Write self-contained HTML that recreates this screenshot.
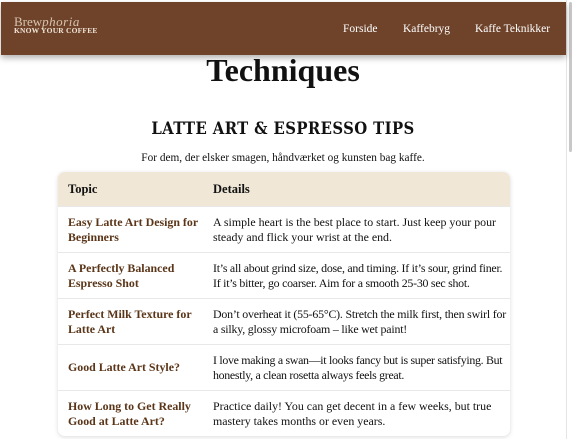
<!DOCTYPE html>
<html><head><meta charset="utf-8">
<style>
*{margin:0;padding:0;box-sizing:border-box}
html,body{width:573px;height:439px;overflow:hidden;background:#fff;font-family:"Liberation Serif",serif;color:#111}
.sb{position:absolute;right:0;top:0;width:7px;height:439px;background:#fff;border-left:1px solid #e4e4e4}
.sb i{position:absolute;left:2px;top:2px;width:3px;height:150px;background:#c8c8c8;border-radius:2px}
header{position:absolute;left:1px;top:2px;width:565px;height:53px;background:#6e432a;box-shadow:0 3px 6px rgba(0,0,0,.3)}
.logo{position:absolute;left:13px;top:15px;color:#e8d8c8;line-height:9px}
.logo .a{font-size:13px;font-family:"Liberation Serif",serif;color:#d8c4b0}
.logo .a em{font-style:italic;letter-spacing:.5px}
.logo .b{font-size:7.5px;font-weight:bold;letter-spacing:.2px;color:#f0e4d8}
nav{position:absolute;top:21px;font-size:11.5px;color:#fff}
h1{position:absolute;top:52px;left:0;width:566px;text-align:center;font-size:32px;font-weight:bold}
h2{position:absolute;top:119px;left:0;width:566px;text-align:center;font-family:"DejaVu Serif Condensed","DejaVu Serif",serif;font-size:16.5px;font-weight:bold;letter-spacing:.4px;color:#111}
p.sub{position:absolute;top:152px;left:0;width:566px;text-align:center;font-size:11.3px}
.tbl{position:absolute;left:58px;top:172px;width:452px;border-radius:7px;box-shadow:0 1px 5px rgba(0,0,0,.15);overflow:hidden}
.row{display:flex;height:46px;border-top:1px solid #e8e8e8;align-items:center;font-size:11.9px;line-height:14.5px}
.row.h{height:34px;background:#f0e7d6;border-top:none;font-weight:bold;font-size:12.5px}
.c1{width:155px;flex:0 0 155px;padding-left:10px;padding-right:8px}
.c2{flex:1;white-space:nowrap;min-width:0}
.row:not(.h) .c1{font-weight:bold;color:#5a3518}
</style></head><body>
<div class="sb"><i></i></div>
<header>
<div class="logo"><div class="a">Brew<em>phoria</em></div><div class="b">KNOW YOUR COFFEE</div></div>
<nav style="left:342px">Forside</nav>
<nav style="left:402px">Kaffebryg</nav>
<nav style="left:474px">Kaffe Teknikker</nav>
</header>
<h1>Techniques</h1>
<h2>LATTE ART &amp; ESPRESSO TIPS</h2>
<p class="sub">For dem, der elsker smagen, håndværket og kunsten bag kaffe.</p>
<div class="tbl">
<div class="row h"><div class="c1">Topic</div><div class="c2">Details</div></div>
<div class="row"><div class="c1">Easy Latte Art Design for Beginners</div><div class="c2">A simple heart is the best place to start. Just keep your pour<br>steady and flick your wrist at the end.</div></div>
<div class="row"><div class="c1">A Perfectly Balanced Espresso Shot</div><div class="c2" style="letter-spacing:-0.25px">It’s all about grind size, dose, and timing. If it’s sour, grind finer.<br>If it’s bitter, go coarser. Aim for a smooth 25-30 sec shot.</div></div>
<div class="row"><div class="c1">Perfect Milk Texture for Latte Art</div><div class="c2" style="letter-spacing:-0.2px">Don’t overheat it (55-65°C). Stretch the milk first, then swirl for<br>a silky, glossy microfoam – like wet paint!</div></div>
<div class="row"><div class="c1">Good Latte Art Style?</div><div class="c2" style="letter-spacing:-0.3px">I love making a swan—it looks fancy but is super satisfying. But<br>honestly, a clean rosetta always feels great.</div></div>
<div class="row"><div class="c1">How Long to Get Really Good at Latte Art?</div><div class="c2">Practice daily! You can get decent in a few weeks, but true<br>mastery takes months or even years.</div></div>
</div>
</body></html>
